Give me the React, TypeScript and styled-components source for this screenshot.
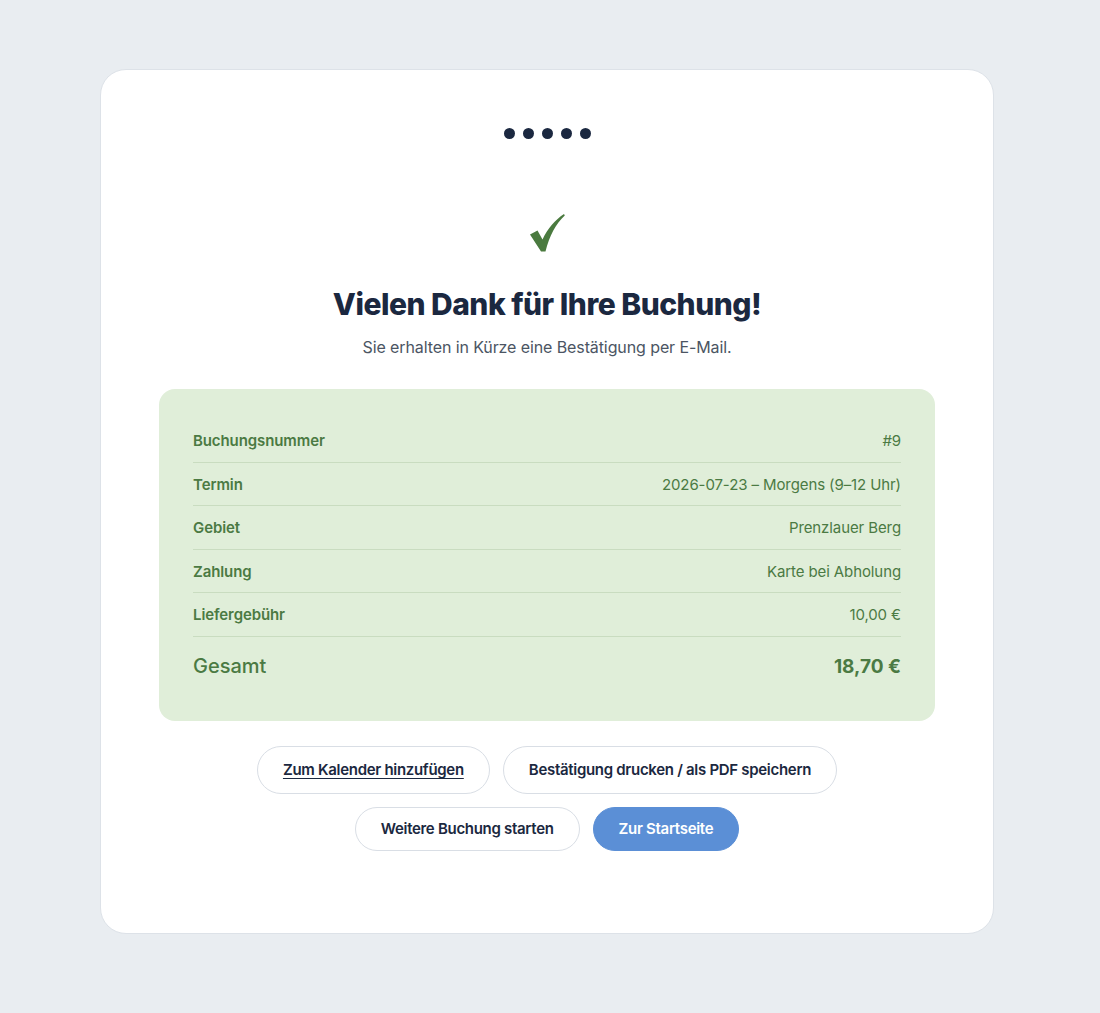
import React from 'react';
import styled, { createGlobalStyle } from 'styled-components';

const GlobalStyle = createGlobalStyle`
	html, body {
		margin: 0;
		padding: 0;
		background: #e9edf1;
		font-family: Inter, 'Noto Sans', sans-serif;
		-webkit-font-smoothing: antialiased;
	}
`;

type SummaryRow = {
	label: string;
	value: string;
};

const rows: SummaryRow[] = [
	{ label: 'Buchungsnummer', value: '#9' },
	{ label: 'Termin', value: '2026-07-23 – Morgens (9–12 Uhr)' },
	{ label: 'Gebiet', value: 'Prenzlauer Berg' },
	{ label: 'Zahlung', value: 'Karte bei Abholung' },
	{ label: 'Liefergebühr', value: '10,00 €' },
];

// brush-style tick shown above the heading
const CheckMark = () => (
	<CheckIcon width="36" height="40" viewBox="0 0 36 40" aria-hidden="true">
		<path
			d="M1 22.5 L8.5 18.5 L13.5 27.5 C19 16 26 8 35 2 L35.8 3.6 C27 11.5 20.5 24 16.5 39.5 L12 39.5 Z"
			fill="#4a7a3f"
		/>
	</CheckIcon>
);

const App: React.FC = () => {
	return (
		<Page>
			<GlobalStyle />
			<Card>
				<Steps>
					{[0, 1, 2, 3, 4].map((i) => (
						<Dot key={i} />
					))}
				</Steps>
				<CheckMark />
				<Title>Vielen Dank für Ihre Buchung!</Title>
				<Lead>Sie erhalten in Kürze eine Bestätigung per E-Mail.</Lead>
				<Summary>
					{rows.map((row) => (
						<Row key={row.label}>
							<Label>{row.label}</Label>
							<Value>{row.value}</Value>
						</Row>
					))}
					<TotalRow>
						<TotalLabel>Gesamt</TotalLabel>
						<TotalValue>18,70 €</TotalValue>
					</TotalRow>
				</Summary>
				<Actions>
					<ButtonRow>
						<LinkButton href="#">Zum Kalender hinzufügen</LinkButton>
						<Button>Bestätigung drucken / als PDF speichern</Button>
					</ButtonRow>
					<ButtonRow>
						<Button $small>Weitere Buchung starten</Button>
						<Button $small $primary>
							Zur Startseite
						</Button>
					</ButtonRow>
				</Actions>
			</Card>
		</Page>
	);
};

const Page = styled.div`
	min-height: 1013px;
	box-sizing: border-box;
	padding: 69px 106px 0 100px;
`;

const Card = styled.div`
	box-sizing: border-box;
	width: 894px;
	height: 865px;
	background: #ffffff;
	border: 1px solid #dde2e8;
	border-radius: 26px;
	padding: 58px 58px 0;
	display: flex;
	flex-direction: column;
	align-items: center;
`;

const Steps = styled.div`
	display: flex;
	gap: 8px;
	height: 11px;
`;

const Dot = styled.span`
	width: 11px;
	height: 11px;
	border-radius: 50%;
	background: #1b2840;
`;

const CheckIcon = styled.svg`
	display: block;
	margin-top: 73px;
`;

const Title = styled.h1`
	margin: 33px 0 0;
	font-size: 30px;
	line-height: 38px;
	font-weight: 800;
	letter-spacing: -0.5px;
	color: #1b2840;
`;

const Lead = styled.p`
	margin: 12px 0 0;
	font-size: 16px;
	line-height: 24px;
	letter-spacing: -0.1px;
	color: #4b5563;
`;

const Summary = styled.div`
	box-sizing: border-box;
	width: 100%;
	margin-top: 30px;
	background: #e0eed9;
	border-radius: 16px;
	padding: 30px 34px 28px;
	color: #4b7a43;
`;

const Row = styled.div`
	box-sizing: border-box;
	display: flex;
	justify-content: space-between;
	align-items: center;
	height: 43.5px;
	padding-top: 1px;
	border-bottom: 1px solid #c9dcc0;
	font-size: 15px;
	letter-spacing: -0.1px;
`;

const Label = styled.span`
	font-weight: 600;
`;

const Value = styled.span`
	font-weight: 400;
`;

const TotalRow = styled.div`
	box-sizing: border-box;
	display: flex;
	justify-content: space-between;
	align-items: center;
	height: 56px;
	padding-top: 3px;
	font-size: 20px;
`;

const TotalLabel = styled.span`
	font-weight: 500;
`;

const TotalValue = styled.span`
	font-weight: 700;
	font-size: 19px;
`;

const Actions = styled.div`
	margin-top: 25px;
	display: flex;
	flex-direction: column;
	align-items: center;
	gap: 13px;
`;

const ButtonRow = styled.div`
	display: flex;
	gap: 13px;
`;

const LinkButton = styled.a`
	box-sizing: border-box;
	display: inline-flex;
	align-items: center;
	height: 48px;
	padding: 0 25px;
	border: 1px solid #d9dee5;
	border-radius: 999px;
	background: #ffffff;
	color: #1b2840;
	font-size: 15px;
	font-weight: 600;
	letter-spacing: -0.3px;
	text-decoration: underline;
	text-underline-offset: 3px;
`;

const Button = styled.button<{ $small?: boolean; $primary?: boolean }>`
	box-sizing: border-box;
	display: inline-flex;
	align-items: center;
	height: ${(props) => (props.$small ? '44px' : '48px')};
	padding: 0 25px;
	border: 1px solid ${(props) => (props.$primary ? '#5b8fd6' : '#d9dee5')};
	border-radius: 999px;
	background: ${(props) => (props.$primary ? '#5b8fd6' : '#ffffff')};
	color: ${(props) => (props.$primary ? '#ffffff' : '#1b2840')};
	font-family: Inter, 'Noto Sans', sans-serif;
	font-size: 15px;
	font-weight: 600;
	letter-spacing: -0.3px;
	cursor: pointer;
`;

export default App;
